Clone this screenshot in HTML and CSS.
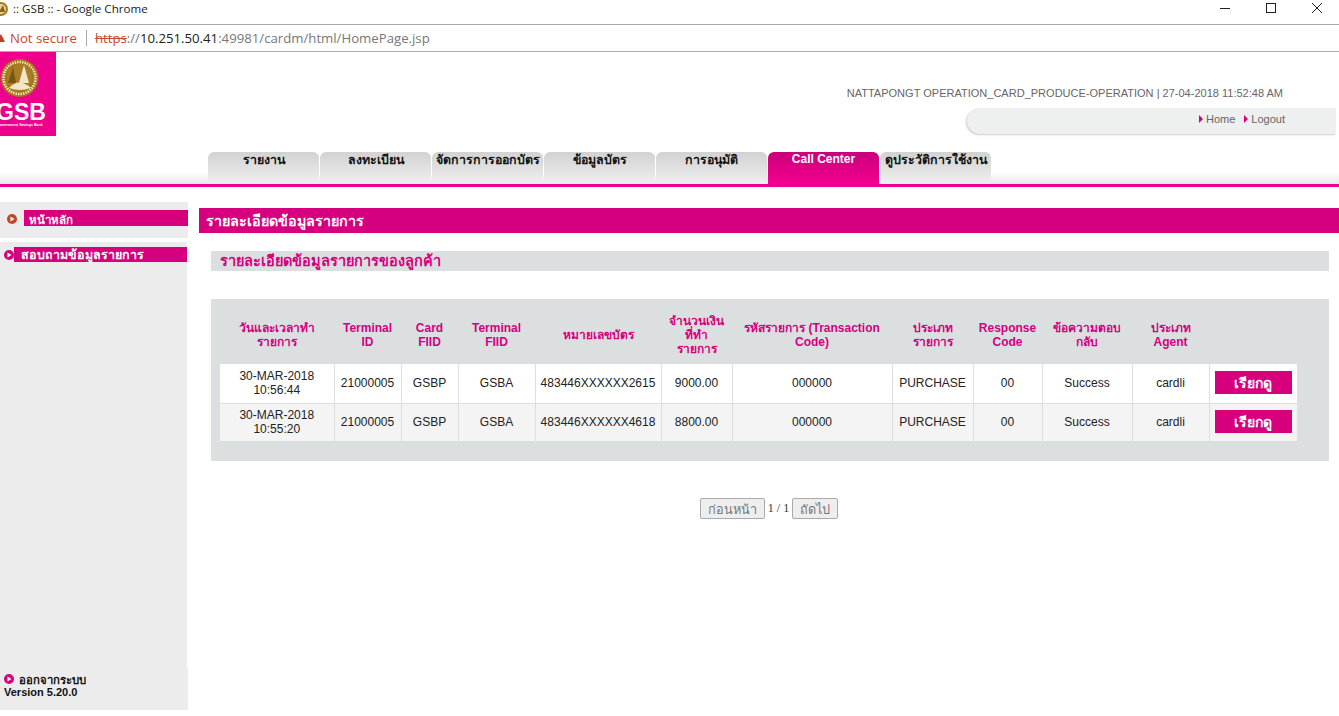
FILE: index.html
```html
<!DOCTYPE html>
<html lang="th">
<head>
<meta charset="utf-8">
<title>GSB</title>
<link rel="stylesheet" href="styles.css">
</head>
<body>
<div class="titlebar">
  <svg class="favicon" width="12" height="18" viewBox="0 0 12 18"><circle cx="1" cy="9" r="7" fill="#a87a1c"/><circle cx="1" cy="9" r="5" fill="#e6d29c"/><path d="M3 5L5 12H-1Z" fill="#8a6414"/></svg>
  <span class="title-text">:: GSB :: - Google Chrome</span>
  <div class="winctl">
    <svg width="12" height="12" viewBox="0 0 12 12"><path d="M1 6.500H11" stroke="#222" stroke-width="1"/></svg>
    <svg width="12" height="12" viewBox="0 0 12 12"><rect x="1.500" y="1.500" width="9" height="9" fill="none" stroke="#222" stroke-width="1"/></svg>
    <svg width="12" height="12" viewBox="0 0 12 12"><path d="M1 1L11 11M11 1L1 11" stroke="#222" stroke-width="1"/></svg>
  </div>
</div>
<div class="addressbar">
  <svg class="warn" width="5" height="10" viewBox="0 0 5 10"><path d="M-4 9L1 1L5 9Z" fill="#c5392b"/></svg>
  <span class="not-secure">Not secure</span>
  <span class="addr-sep"></span>
  <span class="url"><s class="https">https</s><span class="url-dim">://</span><span class="url-host">10.251.50.41</span><span class="url-dim">:49981/cardm/html/HomePage.jsp</span></span>
</div>
<header class="header">
  <div class="logo">
    <svg width="56" height="84" viewBox="0 0 56 84">
      <rect width="56" height="84" fill="#ec008c"/>
      <circle cx="19.500" cy="26" r="19" fill="#a5761b"/>
      <circle cx="19.500" cy="26" r="16" fill="none" stroke="#f0e2bc" stroke-width="2.500" stroke-dasharray="1.500 1"/>
      <circle cx="19.500" cy="26" r="13" fill="#a87c26"/>
      <path d="M24 13L29 31H19Z" fill="#f3e6c4"/>
      <path d="M13 15L16 31H8Z" fill="#7a5510"/>
      <path d="M9 36Q19 25 31 36Q20 40 9 36Z" fill="#f3e6c4"/>
      <text class="logo-gsb" x="-4" y="68">GSB</text>
      <text class="logo-sub" x="-3" y="74">Government Savings Bank</text>
    </svg>
  </div>
  <div class="header-right">
    <div class="user-line">NATTAPONGT OPERATION_CARD_PRODUCE-OPERATION | 27-04-2018 11:52:48 AM</div>
    <div class="home-bar">
      <a class="home-link"><i class="arrow"></i>Home</a>
      <a class="home-link"><i class="arrow"></i>Logout</a>
    </div>
  </div>
</header>
<nav class="tabs">
  <a class="tab">รายงาน</a>
  <a class="tab">ลงทะเบียน</a>
  <a class="tab">จัดการการออกบัตร</a>
  <a class="tab">ข้อมูลบัตร</a>
  <a class="tab">การอนุมัติ</a>
  <a class="tab tab-active">Call Center</a>
  <a class="tab">ดูประวัติการใช้งาน</a>
</nav>
<main class="main">
  <aside class="sidebar">
    <div class="side-home">
      <svg class="bullet" width="10" height="10" viewBox="0 0 10 10"><circle cx="5" cy="5" r="5" fill="#c0462c"/><path d="M3.500 2.500L7.500 5L3.500 7.500Z" fill="#fff"/></svg>
      <span class="side-home-label">หน้าหลัก</span>
    </div>
    <div class="side-menu">
      <div class="side-query">
        <svg class="bullet" width="10" height="10" viewBox="0 0 10 10"><circle cx="5" cy="5" r="5" fill="#d6007f"/><path d="M3.500 2.500L7.500 5L3.500 7.500Z" fill="#fff"/></svg>
        <span class="side-query-label">สอบถามข้อมูลรายการ</span>
      </div>
    </div>
    <div class="side-foot">
      <div class="logout-row">
        <svg class="bullet" width="10" height="10" viewBox="0 0 10 10"><circle cx="5" cy="5" r="5" fill="#d6007f"/><path d="M3.500 2.500L7.500 5L3.500 7.500Z" fill="#fff"/></svg>
        <span>ออกจากระบบ</span>
      </div>
      <div class="version">Version 5.20.0</div>
    </div>
  </aside>
  <section class="content">
    <h1 class="page-title">รายละเอียดข้อมูลรายการ</h1>
    <h2 class="sub-title">รายละเอียดข้อมูลรายการของลูกค้า</h2>
    <div class="panel">
      <table class="grid">
        <colgroup>
          <col class="c1"><col class="c2"><col class="c3"><col class="c4"><col class="c5"><col class="c6"><col class="c7"><col class="c8"><col class="c9"><col class="c10"><col class="c11"><col class="c12">
        </colgroup>
        <thead>
          <tr>
            <th>วันและเวลาทำ<br>รายการ</th>
            <th>Terminal<br>ID</th>
            <th>Card<br>FIID</th>
            <th>Terminal<br>FIID</th>
            <th>หมายเลขบัตร</th>
            <th>จำนวนเงิน<br>ที่ทำ<br>รายการ</th>
            <th>รหัสรายการ (Transaction<br>Code)</th>
            <th>ประเภท<br>รายการ</th>
            <th>Response<br>Code</th>
            <th>ข้อความตอบ<br>กลับ</th>
            <th>ประเภท<br>Agent</th>
            <th></th>
          </tr>
        </thead>
        <tbody>
          <tr class="row-a">
            <td>30-MAR-2018<br>10:56:44</td><td>21000005</td><td>GSBP</td><td>GSBA</td><td>483446XXXXXX2615</td><td>9000.00</td><td>000000</td><td>PURCHASE</td><td>00</td><td>Success</td><td>cardli</td>
            <td><button class="view-btn">เรียกดู</button></td>
          </tr>
          <tr class="row-b">
            <td>30-MAR-2018<br>10:55:20</td><td>21000005</td><td>GSBP</td><td>GSBA</td><td>483446XXXXXX4618</td><td>8800.00</td><td>000000</td><td>PURCHASE</td><td>00</td><td>Success</td><td>cardli</td>
            <td><button class="view-btn">เรียกดู</button></td>
          </tr>
        </tbody>
      </table>
    </div>
    <div class="pager">
      <button class="page-btn" disabled>ก่อนหน้า</button>
      <span class="page-num">1 / 1</span>
      <button class="page-btn" disabled>ถัดไป</button>
    </div>
  </section>
</main>
</body>
</html>
```
FILE: styles.css
```css
* { box-sizing: border-box; }
html, body { margin: 0; padding: 0; background: #fff; overflow: hidden; }
body { width: 1339px; height: 716px; font-family: "Liberation Sans", Arial, sans-serif; }

.titlebar { height: 25px; border-bottom: 1px solid #a8a8a8; display: flex; align-items: center; font-family: "Open Sans", sans-serif; font-size: 11.600px; color: #222; }
.favicon { display: block; margin: 0 0 7px 0; }
.title-text { line-height: 18px; padding-bottom: 7px; padding-left: 1px; }
.winctl { margin-left: auto; display: flex; gap: 34px; padding-right: 16px; padding-bottom: 8px; }
.winctl svg { display: block; }

.addressbar { height: 27px; border-bottom: 1px solid #a8a8a8; display: flex; align-items: center; font-family: "Open Sans", sans-serif; font-size: 13.200px; padding-bottom: 1px; }
.warn { display: block; margin-right: 5px; }
.not-secure { color: #c5492f; }
.addr-sep { width: 1px; height: 16px; background: #aaa; margin: 0 8px 0 9px; }
.https { color: #c5492f; }
.url-dim { color: #777; }
.url-host { color: #222; }

.header { height: 100px; display: flex; }
.logo { width: 56px; height: 84px; flex: none; }
.logo svg { display: block; }
.logo-gsb { font: bold 23px "Liberation Sans", sans-serif; fill: #fff; }
.logo-sub { font: bold 3.600px "Liberation Sans", sans-serif; fill: #fff; }
.header-right { flex: 1; display: flex; flex-direction: column; align-items: flex-end; }
.user-line { margin-top: 35px; margin-right: 56px; font-size: 11.030px; line-height: 13px; color: #666; white-space: nowrap; }
.home-bar { margin-top: 8px; margin-right: 3px; width: 369px; height: 26px; background: #eeefef; border-radius: 13px 0 0 13px; box-shadow: -1px 1px 2px #ccc; display: flex; justify-content: flex-end; align-items: center; gap: 9px; padding: 0 51px 4px 0; font-size: 11px; color: #666; }
.home-link { display: flex; align-items: center; }
.arrow { display: block; width: 0; height: 0; border-left: 4px solid #d6007f; border-top: 4px solid transparent; border-bottom: 4px solid transparent; margin-right: 3px; }

.tabs { height: 35px; padding: 0 0 0 208px; display: flex; gap: 1px; border-bottom: 3px solid #f0008c; background: linear-gradient(to bottom, #fff 0, #fff 20px, #e9e9e9 32px); }
.tab { width: 111px; height: 32px; border-radius: 6px 6px 0 0; background: linear-gradient(to bottom, #d2d2d2, #efefef); color: #111; font-size: 12.400px; font-weight: bold; text-align: center; line-height: 16px; white-space: nowrap; overflow: hidden; }
.tab-active { background: linear-gradient(to bottom, #c9007a, #f5008f); color: #fff; line-height: 14px; font-size: 12px; }

.main { height: 523px; display: flex; }
.sidebar { width: 188px; flex: none; margin-top: 15px; display: flex; flex-direction: column; height: 508px; font-size: 11.500px; font-weight: bold; }
.side-home { height: 36px; background: #ececec; display: flex; align-items: flex-start; padding: 8px 0 0 7px; }
.side-home-label { margin-left: 7px; flex: 1; height: 16px; background: #d6007f; color: #fff; padding-left: 5px; line-height: 20px; }
.bullet { display: block; flex: none; }
.side-home .bullet { margin-top: 4px; }
.side-menu { margin-top: 4px; margin-right: 1px; flex: 1; background: #ececec; padding: 5px 0 0 4px; }
.side-query { display: flex; align-items: center; height: 15px; }
.side-query-label { flex: 1; height: 15px; background: #d6007f; color: #fff; padding-left: 7px; line-height: 16px; font-size: 12.500px; }
.side-foot { height: 42px; background: #ececec; padding: 6px 0 0 4px; }
.logout-row { display: flex; align-items: center; gap: 5px; height: 13px; line-height: 13px; color: #111; font-size: 11.300px; }
.logout-row .bullet { margin-top: -3px; }
.version { line-height: 13px; font-size: 11px; color: #111; margin-top: -1px; }

.content { flex: 1; min-width: 0; margin-left: 11px; }
.page-title { margin: 21px 0 0 0; height: 25px; background: #d6007f; color: #fff; font-size: 14.300px; line-height: 27px; padding-left: 7px; font-weight: bold; }
.sub-title { margin: 18px 10px 0 12px; height: 20px; background: #dcdfe0; color: #d6007f; font-size: 14.500px; line-height: 21px; padding-left: 9px; font-weight: bold; }
.panel { margin: 28px 10px 0 12px; height: 162px; background: #dcdfe0; padding: 0 32px 0 9px; }
.grid { border-collapse: collapse; table-layout: fixed; width: 1077px; }
.c1 { width: 114px; } .c2 { width: 67px; } .c3 { width: 57px; } .c4 { width: 77px; } .c5 { width: 126px; } .c6 { width: 71px; } .c7 { width: 160px; } .c8 { width: 81px; } .c9 { width: 69px; } .c10 { width: 90px; } .c11 { width: 77px; } .c12 { width: 88px; }
.grid th { height: 65px; padding: 6px 0 0; text-align: center; vertical-align: middle; color: #d6007f; font-size: 12px; line-height: 14px; font-weight: bold; }
.grid td { height: 39px; padding: 0; text-align: center; vertical-align: middle; font-size: 12px; line-height: 14px; color: #222; border-right: 1px solid #dedede; border-bottom: 1px solid #dedede; }
.grid td:last-child { border-right: 0; }
.grid tr:last-child td { border-bottom: 0; height: 38px; }
.row-a td { background: #fff; }
.row-b td { background: #f4f4f4; }
.view-btn { display: block; width: 77px; height: 23px; margin: 0 0 1px 5px; border: 0; background: #d6007f; color: #fff; font: bold 14px "Liberation Sans", sans-serif; padding: 0; }

.pager { margin-top: 37px; display: flex; justify-content: center; align-items: center; gap: 3px; }
.page-btn { height: 21px; padding: 0 7px; background: #eee; border: 1px solid #aaa; border-radius: 2px; color: #777; font: 12.700px "Liberation Sans", sans-serif; }
.page-num { font: 12px "Liberation Serif", serif; color: #333; }
```
